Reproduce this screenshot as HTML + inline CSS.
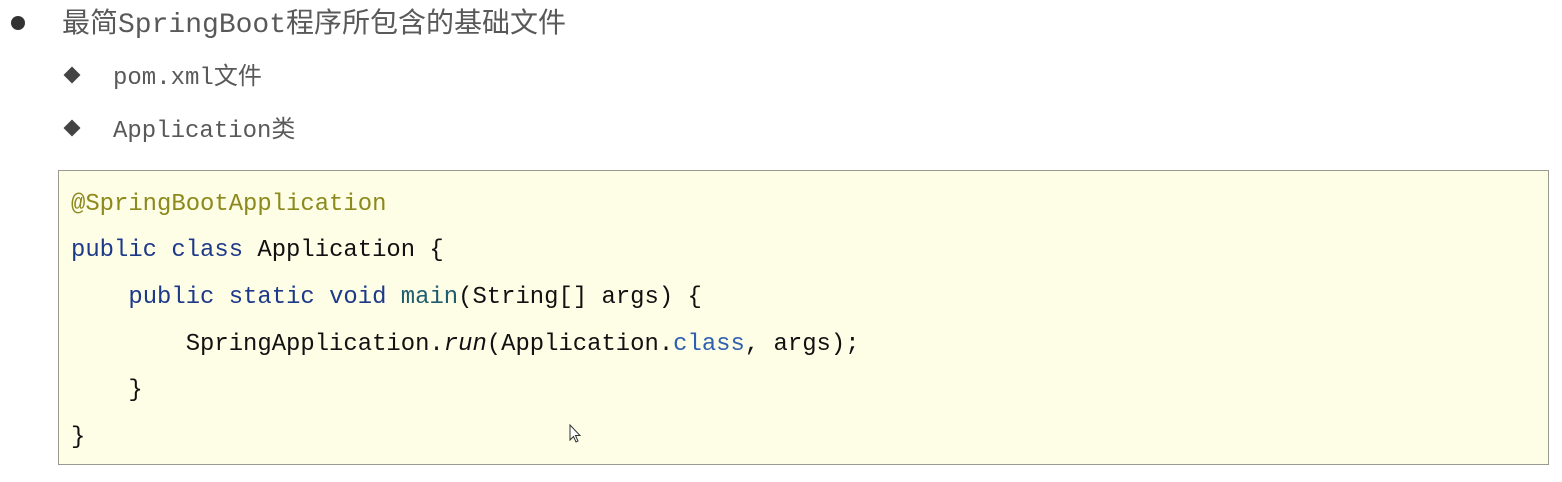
<!DOCTYPE html>
<html><head><meta charset="utf-8"><style>
html,body{margin:0;padding:0;background:#fff;width:1562px;height:482px;overflow:hidden;position:relative}
.t{position:absolute;white-space:pre;font-family:"Liberation Mono","Noto Sans CJK SC",monospace;color:#595959}
.box{position:absolute;left:58px;top:170px;width:1491px;height:295px;background:#fefde6;border:1px solid #9a9a92;box-sizing:border-box}
.c{position:absolute;left:71px;white-space:pre;font-family:"Liberation Mono",monospace;font-size:23.9px;color:#111;line-height:30px}
.k{color:#1d3a8a}.m{color:#1f5e6e}.a{color:#8c8a1c}.l{color:#2f5fb0}
.dot{position:absolute;left:11px;top:16px;width:14px;height:14px;border-radius:50%;background:#333}
.dia{position:absolute;width:12px;height:12px;background:#444;transform:rotate(45deg)}
</style></head><body>
<div class="dot"></div>
<div class="t" style="left:62px;top:8px;font-size:28px;line-height:36px">最简SpringBoot程序所包含的基础文件</div>
<div class="dia" style="left:66px;top:69px"></div>
<div class="t" style="left:113px;top:63px;font-size:24px;line-height:32px">pom.xml文件</div>
<div class="dia" style="left:66px;top:122px"></div>
<div class="t" style="left:113px;top:116px;font-size:24px;line-height:32px">Application类</div>
<div class="box"></div>
<div class="c a" style="top:190px">@SpringBootApplication</div>
<div class="c" style="top:236px"><span class="k">public class</span> Application {</div>
<div class="c" style="top:283px">    <span class="k">public static void</span> <span class="m">main</span>(String[] args) {</div>
<div class="c" style="top:330px">        SpringApplication.<i>run</i>(Application.<span class="l">class</span>, args);</div>
<div class="c" style="top:376px">    }</div>
<div class="c" style="top:423px">}</div>
<svg style="position:absolute;left:569px;top:424px" width="14" height="20" viewBox="0 0 14 20"><path d="M1 1 L1 16 L4.5 12.5 L7 18 L9 17 L6.5 11.5 L11 11.5 Z" fill="#fff" stroke="#333" stroke-width="1"/></svg>
</body></html>
